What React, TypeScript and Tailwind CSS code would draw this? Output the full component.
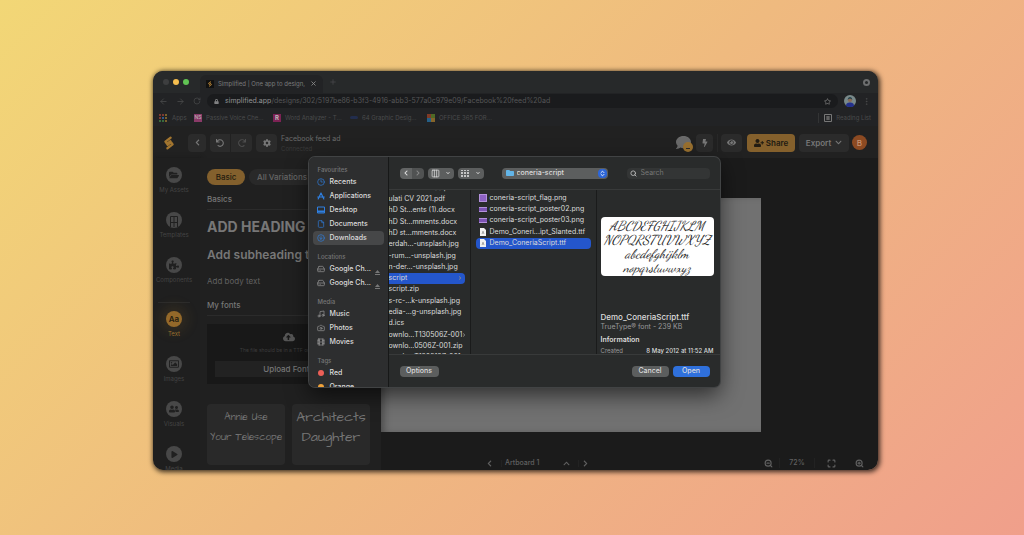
import * as React from 'react';
import {
  FaBolt,
  FaChevronDown,
  FaChevronLeft,
  FaChevronRight,
  FaChevronUp,
  FaCloudUploadAlt,
  FaCog,
  FaComment,
  FaEye,
  FaFolder,
  FaFolderOpen,
  FaLock,
  FaPlay,
  FaPuzzlePiece,
  FaRedo,
  FaRegImage,
  FaRegStar,
  FaUndo,
  FaUserFriends,
  FaUserPlus,
} from 'react-icons/fa';
import {
  ArrowLeft,
  ArrowRight,
  Camera,
  ChevronsUpDown,
  CircleArrowDown,
  Clock3,
  Columns3,
  EllipsisVertical,
  File,
  Film,
  HardDrive,
  Maximize,
  Music,
  Plus,
  RotateCw,
  Search,
  X,
  ZoomIn,
  ZoomOut,
} from 'lucide-react';

function Logo({ className = '' }: { className?: string }) {
  return (
    <svg className={className} viewBox="0 0 12 14" fill="none" stroke="currentColor" strokeLinecap="round" strokeLinejoin="round" aria-hidden="true">
      <path d="M7.600 1.800 2.400 5.600l1.600 2.200 3.400-2.500M4.400 12.200l5.200-3.800-1.600-2.200-3.400 2.500" strokeWidth="2.300" />
    </svg>
  );
}

function BrowserChrome() {
  return (
    <header className="shrink-0 bg-[#222325] text-[#4c4d4e]">
      <div className="flex h-[22px] items-center bg-[#27292a] pr-2 pl-[10px]">
        <div className="flex w-[37px] gap-1">
          <span className="size-[6px] rounded-full bg-[#3d3e3f]" />
          <span className="size-[6px] rounded-full bg-[#f6be4f]" />
          <span className="size-[6px] rounded-full bg-[#61c454]" />
        </div>
        <div className="flex h-[18px] w-[123px] items-center gap-1 self-end rounded-t-md bg-[#222325] px-[6px] pb-px">
          <span className="grid size-2 shrink-0 place-items-center bg-[#111]">
            <Logo className="size-[6px] text-[#ac7c34]" />
          </span>
          <span className="flex-1 text-[6px] leading-[10px] whitespace-nowrap text-[#7a7b7c]">Simplified | One app to design,</span>
          <button type="button" aria-label="Close tab">
            <X className="size-[7px] text-[#8a8a8a]" strokeWidth={3} />
          </button>
        </div>
        <button type="button" aria-label="New tab" className="ml-[6px]">
          <Plus className="size-2" />
        </button>
        <button type="button" aria-label="Tab search" className="ml-auto grid size-[7px] place-items-center rounded-full bg-[#6d6e6f]">
          <span className="size-[3px] rounded-full bg-[#27292a]" />
        </button>
      </div>
      <div className="flex h-4 items-center pr-[7px] pl-[6px]">
        <div className="flex w-[48px] items-center gap-2">
          <ArrowLeft className="size-[9px]" />
          <ArrowRight className="size-[9px]" />
          <RotateCw className="size-2" />
        </div>
        <div className="flex h-[14px] min-w-0 flex-1 items-center rounded-full bg-[#1a1b1d] px-[7px] text-[7px] leading-[10px]">
          <FaLock className="mr-[6px] size-[5px] text-[#808182]" />
          <span className="text-[#929394]">simplified.app</span>
          <input
            aria-label="Address"
            className="min-w-0 flex-1 bg-transparent text-[#555657] outline-none"
            defaultValue="/designs/302/5197be86-b3f3-4916-abb3-577a0c979e09/Facebook%20feed%20ad"
          />
          <FaRegStar className="size-[7px] text-[#777]" />
        </div>
        <svg className="mx-[6px] size-3" viewBox="0 0 12 12" aria-hidden="true">
          <circle cx="6" cy="6" r="6" fill="#79898a" />
          <path d="M2 11c0-3 2-3.500 4-3.500s4 .5 4 3.500c-2 1.300-6 1.300-8 0Z" fill="#23308c" />
          <circle cx="6" cy="5" r="2.100" fill="#8b6b56" />
          <path d="M3.700 5c0-4 4.600-4 4.600 0-1-1.600-3.600-1.600-4.600 0Z" fill="#26424b" />
        </svg>
        <EllipsisVertical className="size-[9px]" />
      </div>
      <nav className="flex h-[17px] items-center pr-[7px] pl-[6px] text-[6px] leading-[10px] whitespace-nowrap text-[#4a4b4c]">
        <a href="#apps" className="flex w-[35px] items-center gap-[5px]">
          <svg className="size-[8px]" viewBox="0 0 8 8" aria-hidden="true">
            <path d="M0 0h2v2H0zM3 0h2v2H3zM0 3h2v2H0z" fill="#7d3a32" />
            <path d="M6 0h2v2H6zM6 3h2v2H6zM6 6h2v2H6z" fill="#7b612b" />
            <path d="M3 3h2v2H3z" fill="#31598d" />
            <path d="M0 6h2v2H0zM3 6h2v2H3z" fill="#376b3d" />
          </svg>
          Apps
        </a>
        <a href="#passive" className="flex w-[79px] items-center gap-1">
          <span className="grid size-[8px] place-items-center bg-[#8a3a68] text-[5px] leading-none text-[#bbb]">NS</span>
          Passive Voice Che...
        </a>
        <a href="#word" className="flex w-[77px] items-center gap-1">
          <span className="grid size-[8px] place-items-center bg-[#7c2254] text-[6px] leading-none font-bold text-[#bbb]">R</span>
          Word Analyzer - T...
        </a>
        <a href="#graphic" className="flex w-[77px] items-center gap-1">
          <span className="h-[3px] w-[8px] rounded-full bg-[#222d4d]" />
          64 Graphic Desig...
        </a>
        <a href="#office" className="flex items-center gap-1">
          <svg className="size-[8px]" viewBox="0 0 8 8" aria-hidden="true">
            <path d="M0 0h4v4H0z" fill="#7f3a26" />
            <path d="M4 0h4v4H4z" fill="#4f6a26" />
            <path d="M0 4h4v4H0z" fill="#255f86" />
            <path d="M4 4h4v4H4z" fill="#86652a" />
          </svg>
          OFFICE 365 FOR...
        </a>
        <a href="#reading" className="ml-auto flex items-center gap-1 border-l border-[#333435] pl-[5px]">
          <svg className="size-[8px] text-[#777]" viewBox="0 0 8 8" fill="none" stroke="currentColor" aria-hidden="true">
            <path d="M.5.5h7v7h-7zM2 3h4M2 5h4M4 2v4" />
          </svg>
          Reading List
        </a>
      </nav>
    </header>
  );
}

function AppBar() {
  const square = 'grid h-[18px] place-items-center bg-[#2b2b2b] text-[#777]';

  return (
    <div className="flex h-8 shrink-0 items-center bg-[#212121] pt-px pr-[11px] pl-[10px] whitespace-nowrap">
      <Logo className="mr-[13px] h-[14px] w-[12px] text-[#a2752f]" />
      <button type="button" aria-label="Back" className={`${square} w-[18px] rounded`}>
        <FaChevronLeft className="size-[7px]" />
      </button>
      <button type="button" aria-label="Undo" className={`${square} ml-1 w-5 rounded-l`}>
        <FaUndo className="size-2" />
      </button>
      <button type="button" aria-label="Redo" className={`${square} ml-px w-[21px] rounded-r`}>
        <FaRedo className="size-2 text-[#4e4e4e]" />
      </button>
      <button type="button" aria-label="Settings" className={`${square} ml-1 w-[21px] rounded`}>
        <FaCog className="size-2" />
      </button>
      <div className="ml-1 pt-[2px] leading-[10px]">
        <p className="text-[7px] text-[#6a6a6a]">Facebook feed ad</p>
        <p className="text-[6px] text-[#393939]">Connected</p>
      </div>
      <div className="relative ml-auto">
        <FaComment className="size-[15px] text-[#6a6a6a]" />
        <span className="absolute -right-[2px] -bottom-[2px] grid size-[10px] place-items-center rounded-full bg-[#99702f]">
          <span className="mt-[3px] h-px w-1 bg-[#2b2b2b]" />
        </span>
      </div>
      <button type="button" aria-label="Shortcuts" className={`${square} ml-[5px] w-[17px] rounded`}>
        <FaBolt className="size-2" />
      </button>
      <span className="mr-[3px] ml-1 h-[18px] w-px bg-[#282828]" />
      <button type="button" aria-label="Preview" className={`${square} w-[21px] rounded`}>
        <FaEye className="size-[9px]" />
      </button>
      <button type="button" className="ml-[5px] flex h-[18px] w-[48px] items-center justify-center gap-[2px] rounded bg-[#84602c] text-[8px] font-semibold text-[#211b12]">
        <FaUserPlus className="size-[10px]" />
        Share
      </button>
      <button type="button" className="ml-1 flex h-[18px] w-[50px] items-center justify-center gap-1 rounded bg-[#2b2b2b] text-[8px] font-semibold text-[#777]">
        Export
        <FaChevronDown className="size-[7px]" />
      </button>
      <span className="ml-[3px] grid size-[15px] place-items-center rounded-full bg-[#8c4a22] text-[8px] leading-[10px] font-medium text-[#c89474]">B</span>
    </div>
  );
}

interface RailItemProps {
  icon: React.ReactNode;
  label: string;
  active?: boolean;
}

function RailItem({ icon, label, active = false }: RailItemProps) {
  return (
    <button
      type="button"
      className={`flex h-[45px] w-full shrink-0 flex-col items-center gap-[2px] text-[6px] leading-[10px] ${active ? 'text-[#99702f]' : 'text-[#444]'}`}
    >
      <span
        className={`grid size-4 place-items-center rounded-full ${active ? 'bg-[#94692a] text-[8px] font-semibold text-[#241c10] shadow-[0_0_12px_6px_rgba(148,105,42,0.15)]' : 'bg-[#484848] text-[#202020]'}`}
      >
        {icon}
      </span>
      {label}
    </button>
  );
}

function Rail() {
  return (
    <nav className="flex w-[47px] shrink-0 flex-col overflow-hidden bg-[#1f1f1f] pt-[9px] pr-[5px] shadow-[2px_0_4px_#191919]">
      <RailItem icon={<FaFolderOpen className="size-[10px]" />} label="My Assets" />
      <RailItem
        label="Templates"
        icon={
          <svg className="size-[14px]" viewBox="0 0 14 14" fill="none" stroke="currentColor" aria-hidden="true">
            <path d="M3.500 15V3.500h7V15M7 3.500V15M3.500 9.500h7" />
          </svg>
        }
      />
      <RailItem icon={<FaPuzzlePiece className="size-[10px]" />} label="Components" />
      <hr className="mb-2 ml-[5px] w-8 shrink-0 border-[#2b2b2b]" />
      <RailItem icon="Aa" label="Text" active />
      <RailItem icon={<FaRegImage className="size-[10px]" />} label="Images" />
      <RailItem icon={<FaUserFriends className="size-[10px]" />} label="Visuals" />
      <RailItem icon={<FaPlay className="ml-px size-[7px]" />} label="Media" />
    </nav>
  );
}

function TextPanel() {
  return (
    <section className="relative w-[181px] shrink-0 overflow-hidden bg-[#202020] px-[7px] pt-[11px] whitespace-nowrap text-[#777]">
      <div className="flex h-4 gap-1 text-[8px] leading-4 font-medium">
        <button type="button" className="w-[38px] rounded-full bg-[#83602d] text-[#241c10]">Basic</button>
        <button type="button" className="rounded-full bg-[#292929] px-2 text-[#666]">All Variations</button>
      </div>
      <h2 className="mt-2 text-[8px] leading-3 font-medium">Basics</h2>
      <hr className="mt-1 border-[#2b2b2b]" />
      <h1 className="mt-2 text-[14px] leading-[18px] font-bold">ADD HEADING</h1>
      <p className="mt-[11px] text-[12px] leading-4 font-semibold">Add subheading text</p>
      <p className="mt-3 text-[8px] leading-3 text-[#606060]">Add body text</p>
      <h2 className="mt-3 text-[8px] leading-3 font-medium">My fonts</h2>
      <hr className="mt-1 border-[#2b2b2b]" />
      <div className="mt-2 mr-[4px] flex h-[60px] flex-col items-center bg-[#181818] px-2 pt-[7px]">
        <FaCloudUploadAlt className="size-3 text-[#555]" />
        <p className="mt-[3px] text-[5px] leading-[8px] text-[#3d3d3d]">The file should be in a TTF or OTF format</p>
        <button type="button" className="mt-[7px] h-4 w-full bg-[#222] text-[8px] leading-4 font-medium">Upload Fonts</button>
      </div>
      <div className="mt-5 mr-[4px] grid grid-cols-2 gap-[7px] text-center font-['Architects_Daughter','Comic_Neue',cursive] leading-5 text-[#747474]">
        <button type="button" className="h-[61px] rounded bg-[#292929] pb-4 text-[10px] font-light">
          Annie Use
          <br />
          Your Telescope
        </button>
        <button type="button" className="h-[61px] rounded bg-[#292929] pb-4 text-[14px]">
          Architects
          <br />
          Daughter
        </button>
      </div>
    </section>
  );
}

function Artboard() {
  return (
    <main className="flex min-w-0 flex-1 flex-col bg-[#1b1b1b] pt-10">
      <div className="mr-[117px] flex-1 bg-[#717171] shadow-[inset_6px_0_8px_-4px_#444]" />
      <div className="mt-6 flex h-[14px] items-center pr-[14px] pl-[105px] text-[7px] leading-[10px] font-medium text-[#606060]">
        <button type="button" aria-label="Previous artboard" className="border-r border-[#222] pr-[8px]">
          <FaChevronLeft className="size-[7px]" />
        </button>
        <button type="button" className="flex w-[68px] items-center justify-between pl-[3px]">
          Artboard 1
          <FaChevronUp className="size-[7px]" />
        </button>
        <button type="button" aria-label="Next artboard" className="ml-2 border-l border-[#222] pl-[3px]">
          <FaChevronRight className="size-[7px]" />
        </button>
        <button type="button" aria-label="Zoom out" className="ml-auto">
          <ZoomOut className="size-[9px]" strokeWidth={3} />
        </button>
        <span className="mx-[6px] w-9 border-x border-[#222] text-center">72%</span>
        <button type="button" aria-label="Fit" className="mx-[6px]">
          <Maximize className="size-[9px]" strokeWidth={3} />
        </button>
        <button type="button" aria-label="Zoom in" className="ml-[13px]">
          <ZoomIn className="size-[9px]" strokeWidth={3} />
        </button>
      </div>
    </main>
  );
}

interface PlaceProps {
  icon: React.ReactNode;
  label: string;
  active?: boolean;
  eject?: boolean;
}

function Place({ icon, label, active = false, eject = false }: PlaceProps) {
  return (
    <li>
      <button
        type="button"
        className={`flex h-[14px] w-full items-center gap-[4px] rounded px-1 text-left text-[7px] leading-[10px] font-medium text-[#dcdcdc] ${active ? 'bg-[#464748]' : ''}`}
      >
        <span className="grid w-[9px] shrink-0 place-items-center">{icon}</span>
        {label}
        {eject && (
          <svg className="mt-[6px] ml-auto size-[5px] shrink-0" viewBox="0 0 5 5" fill="#777" aria-hidden="true">
            <path d="M2.500 0 5 3H0zM0 4h5v1H0z" />
          </svg>
        )}
      </button>
    </li>
  );
}

function PlaceGroup({ title, children }: { title: string; children: React.ReactNode }) {
  return (
    <section className="mb-[7px]">
      <h3 className="pl-[5px] text-[6px] leading-[10px] font-medium text-[#757677]">{title}</h3>
      <ul>{children}</ul>
    </section>
  );
}

function Places() {
  return (
    <aside className="w-[80px] shrink-0 overflow-hidden border-r border-[#171818] bg-[#2d2e2f] px-[4px] pt-[8px]">
      <PlaceGroup title="Favourites">
        <Place icon={<Clock3 className="size-2 text-[#2f7fe0]" />} label="Recents" />
        <Place
          label="Applications"
          icon={
            <svg className="size-2" viewBox="0 0 8 8" fill="none" stroke="#2f7fe0" strokeLinecap="round" aria-hidden="true">
              <path d="M4 1 1.200 7M4 1l2.800 6M.7 5h6.600" strokeWidth="1.200" />
            </svg>
          }
        />
        <Place
          label="Desktop"
          icon={
            <svg className="size-2" viewBox="0 0 8 8" fill="none" stroke="#2f7fe0" aria-hidden="true">
              <path d="M.5 1h7v6h-7z" />
              <path d="M1 5.500h6" strokeWidth="2" />
            </svg>
          }
        />
        <Place icon={<File className="size-2 text-[#2f7fe0]" />} label="Documents" />
        <Place icon={<CircleArrowDown className="size-2 text-[#2f7fe0]" />} label="Downloads" active />
      </PlaceGroup>
      <PlaceGroup title="Locations">
        <Place icon={<HardDrive className="size-2 text-[#999]" />} label="Google Ch..." eject />
        <Place icon={<HardDrive className="size-2 text-[#999]" />} label="Google Ch..." eject />
      </PlaceGroup>
      <PlaceGroup title="Media">
        <Place icon={<Music className="size-2 text-[#999]" />} label="Music" />
        <Place icon={<Camera className="size-2 text-[#999]" />} label="Photos" />
        <Place icon={<Film className="size-2 text-[#999]" />} label="Movies" />
      </PlaceGroup>
      <PlaceGroup title="Tags">
        <Place icon={<span className="size-[6px] rounded-full bg-[#ec5f57]" />} label="Red" />
        <Place icon={<span className="size-[6px] rounded-full bg-[#f0a23a]" />} label="Orange" />
      </PlaceGroup>
    </aside>
  );
}

const downloads = [
  { name: 'ulati CV 2021 (1).pdf' },
  { name: 'ulati CV 2021.pdf' },
  { name: 'hD St...ents (1).docx' },
  { name: 'hD St...mments.docx' },
  { name: 'hD st...mments.docx' },
  { name: 'erdah...-unsplash.jpg' },
  { name: '-rum...-unsplash.jpg' },
  { name: 'n-der...-unsplash.jpg' },
  { name: 'script', folder: true, selected: true },
  { name: 'script.zip' },
  { name: 's-rc-...k-unsplash.jpg' },
  { name: 'edia-...g-unsplash.jpg' },
  { name: 'd.ics' },
  { name: 'ownlo...T130506Z-001', folder: true },
  { name: 'ownlo...0506Z-001.zip' },
  { name: 'ownlo...T130513Z-001' },
];

const scriptFiles = [
  { name: 'coneria-script_flag.png', kind: 'flag' },
  { name: 'coneria-script_poster02.png', kind: 'poster' },
  { name: 'coneria-script_poster03.png', kind: 'poster' },
  { name: 'Demo_Coneri...ipt_Slanted.ttf', kind: 'font' },
  { name: 'Demo_ConeriaScript.ttf', kind: 'font', selected: true },
];

function FileIcon({ kind }: { kind: string }) {
  if (kind === 'flag') {
    return <span className="size-2 border border-[#b391dc] bg-[#8d62c4]" />;
  }
  if (kind === 'poster') {
    return <span className="h-[5px] w-2 border-y border-[#b391dc] bg-[#7d54b4]" />;
  }
  return (
    <svg className="size-2" viewBox="0 0 8 8" aria-hidden="true">
      <path d="M1 0h4l2 2v6H1z" fill="#f1f1f1" />
      <path d="m3 6 1-3 1 3M3.300 5h1.400" fill="none" stroke="#888" strokeWidth=".6" />
    </svg>
  );
}

function OpenDialog() {
  return (
    <div
      role="dialog"
      aria-label="Open"
      className="flex h-[230px] w-[411px] overflow-hidden rounded-md bg-[#292b2b] text-[7px] leading-[10px] whitespace-nowrap text-[#dcdcdc] shadow-[0_8px_22px_rgba(0,0,0,0.6)] ring-1 ring-[#414344]"
    >
      <Places />
      <div className="flex min-w-0 flex-1 flex-col">
        <div className="flex h-8 shrink-0 items-center pr-[10px] pl-[11px]">
          <button type="button" aria-label="Back" className="grid h-[11px] w-3 place-items-center rounded-l bg-[#636565]">
            <FaChevronLeft className="size-[6px]" />
          </button>
          <button type="button" aria-label="Forward" className="grid h-[11px] w-3 place-items-center rounded-r bg-[#505252] text-[#888]">
            <FaChevronRight className="size-[6px]" />
          </button>
          <button type="button" aria-label="Columns" className="ml-1 flex h-[11px] w-[26px] items-center justify-around rounded bg-[#5c5e5e]">
            <Columns3 className="size-[9px]" />
            <FaChevronDown className="size-1" />
          </button>
          <button type="button" aria-label="Group by" className="ml-1 flex h-[11px] w-[26px] items-center justify-around rounded bg-[#5c5e5e]">
            <svg className="h-[7px] w-2" viewBox="0 0 8 7" fill="#c4c4c4" aria-hidden="true">
              <path d="M0 0h2v1H0zM3 0h2v1H3zM6 0h2v1H6zM0 2h2v2H0zM3 2h2v2H3zM6 2h2v2H6zM0 5h2v2H0zM3 5h2v2H3zM6 5h2v2H6z" />
            </svg>
            <FaChevronDown className="size-1" />
          </button>
          <div className="ml-[18px] flex h-[11px] w-[106px] items-center gap-[3px] rounded bg-[#5c5e5e] pr-px pl-1">
            <FaFolder className="size-2 text-[#62b5e8]" />
            <select aria-label="Folder" className="min-w-0 flex-1 appearance-none bg-transparent font-medium outline-none">
              <option>coneria-script</option>
            </select>
            <span className="grid size-[9px] place-items-center rounded-sm bg-[#2d66d8]">
              <ChevronsUpDown className="size-[7px] text-white" strokeWidth={3} />
            </span>
          </div>
          <label className="ml-auto flex h-[11px] w-[83px] items-center gap-1 rounded bg-[#333535] px-[3px]">
            <Search className="size-[7px] shrink-0 text-[#bbb]" strokeWidth={3} />
            <input type="search" aria-label="Search" placeholder="Search" className="w-full bg-transparent outline-none placeholder:text-[#777]" />
          </label>
        </div>
        <div className="flex min-h-0 flex-1 overflow-hidden border-y border-[#383a3a]">
          <div className="w-[82px] overflow-hidden border-r border-[#1a1b1b]">
            <ul className="-mt-2 grid h-[181px] grid-cols-1 grid-rows-16">
              {downloads.map((file) => (
                <li
                  key={file.name}
                  className={`mr-[5px] flex items-center justify-between rounded-r-sm pr-[3px] ${file.selected ? 'bg-[#2456cb]' : ''}`}
                >
                  {file.name}
                  {file.folder && <FaChevronRight className="size-1 shrink-0 text-[#8a8c8c]" />}
                </li>
              ))}
            </ul>
          </div>
          <div className="w-[126px] border-r border-[#1a1b1b]">
            <ul className="mt-[2px] grid h-[57px] grid-rows-5 px-[5px]">
              {scriptFiles.map((file) => (
                <li
                  key={file.name}
                  className={`flex items-center gap-[2px] rounded-sm pl-[3px] ${file.selected ? 'bg-[#2456cb]' : ''}`}
                >
                  <span className="flex w-[9px] justify-center">
                    <FileIcon kind={file.kind} />
                  </span>
                  {file.name}
                </li>
              ))}
            </ul>
          </div>
          <div className="min-w-0 flex-1 pr-[6px] pl-1">
            <div className="mt-[27px] flex h-[59px] flex-col items-center justify-center overflow-hidden rounded bg-white font-['Dancing_Script','Z003','Liberation_Serif',serif] text-[13px] leading-[14px] text-[#222] italic">
              <p>ABCDEFGHIJKLM</p>
              <p>NOPQRSTUVWXYZ</p>
              <p>abcdefghijklm</p>
              <p>nopqrstuvwxyz</p>
            </div>
            <p className="mt-9 text-[8px] font-medium">Demo_ConeriaScript.ttf</p>
            <p className="text-[#999]">TrueType® font - 239 KB</p>
            <p className="mt-[3px] font-semibold">Information</p>
            <dl className="mt-px flex justify-between text-[6px]">
              <dt className="text-[#999]">Created</dt>
              <dd className="font-medium">8 May 2012 at 11:52 AM</dd>
            </dl>
          </div>
        </div>
        <div className="flex h-8 shrink-0 items-center pr-[10px] pl-[11px] font-medium">
          <button type="button" className="h-[11px] w-[39px] rounded bg-[#5c5e5e]">Options</button>
          <button type="button" className="mr-1 ml-auto h-[11px] w-[37px] rounded bg-[#5c5e5e]">Cancel</button>
          <button type="button" className="h-[11px] w-[37px] rounded bg-[#2f70dc]">Open</button>
        </div>
      </div>
    </div>
  );
}

export default function App() {
  return (
    <div className="flex h-screen min-h-[500px] flex-col bg-linear-135 from-[#f2d776] via-[#efba7f] to-[#f09f8b] pt-[71px] pr-[146px] pb-[65px] pl-[153px] font-['Inter','Liberation_Sans',sans-serif]">
      <div className="relative flex min-h-0 flex-1 flex-col overflow-hidden rounded-[10px] shadow-[1px_1px_5px_1px_rgba(0,0,0,0.75)]">
        <BrowserChrome />
        <AppBar />
        <div className="flex min-h-0 flex-1">
          <Rail />
          <TextPanel />
          <Artboard />
        </div>
        <div className="absolute inset-0 flex items-start justify-center pt-[86px] pr-[3px]">
          <OpenDialog />
        </div>
      </div>
    </div>
  );
}
